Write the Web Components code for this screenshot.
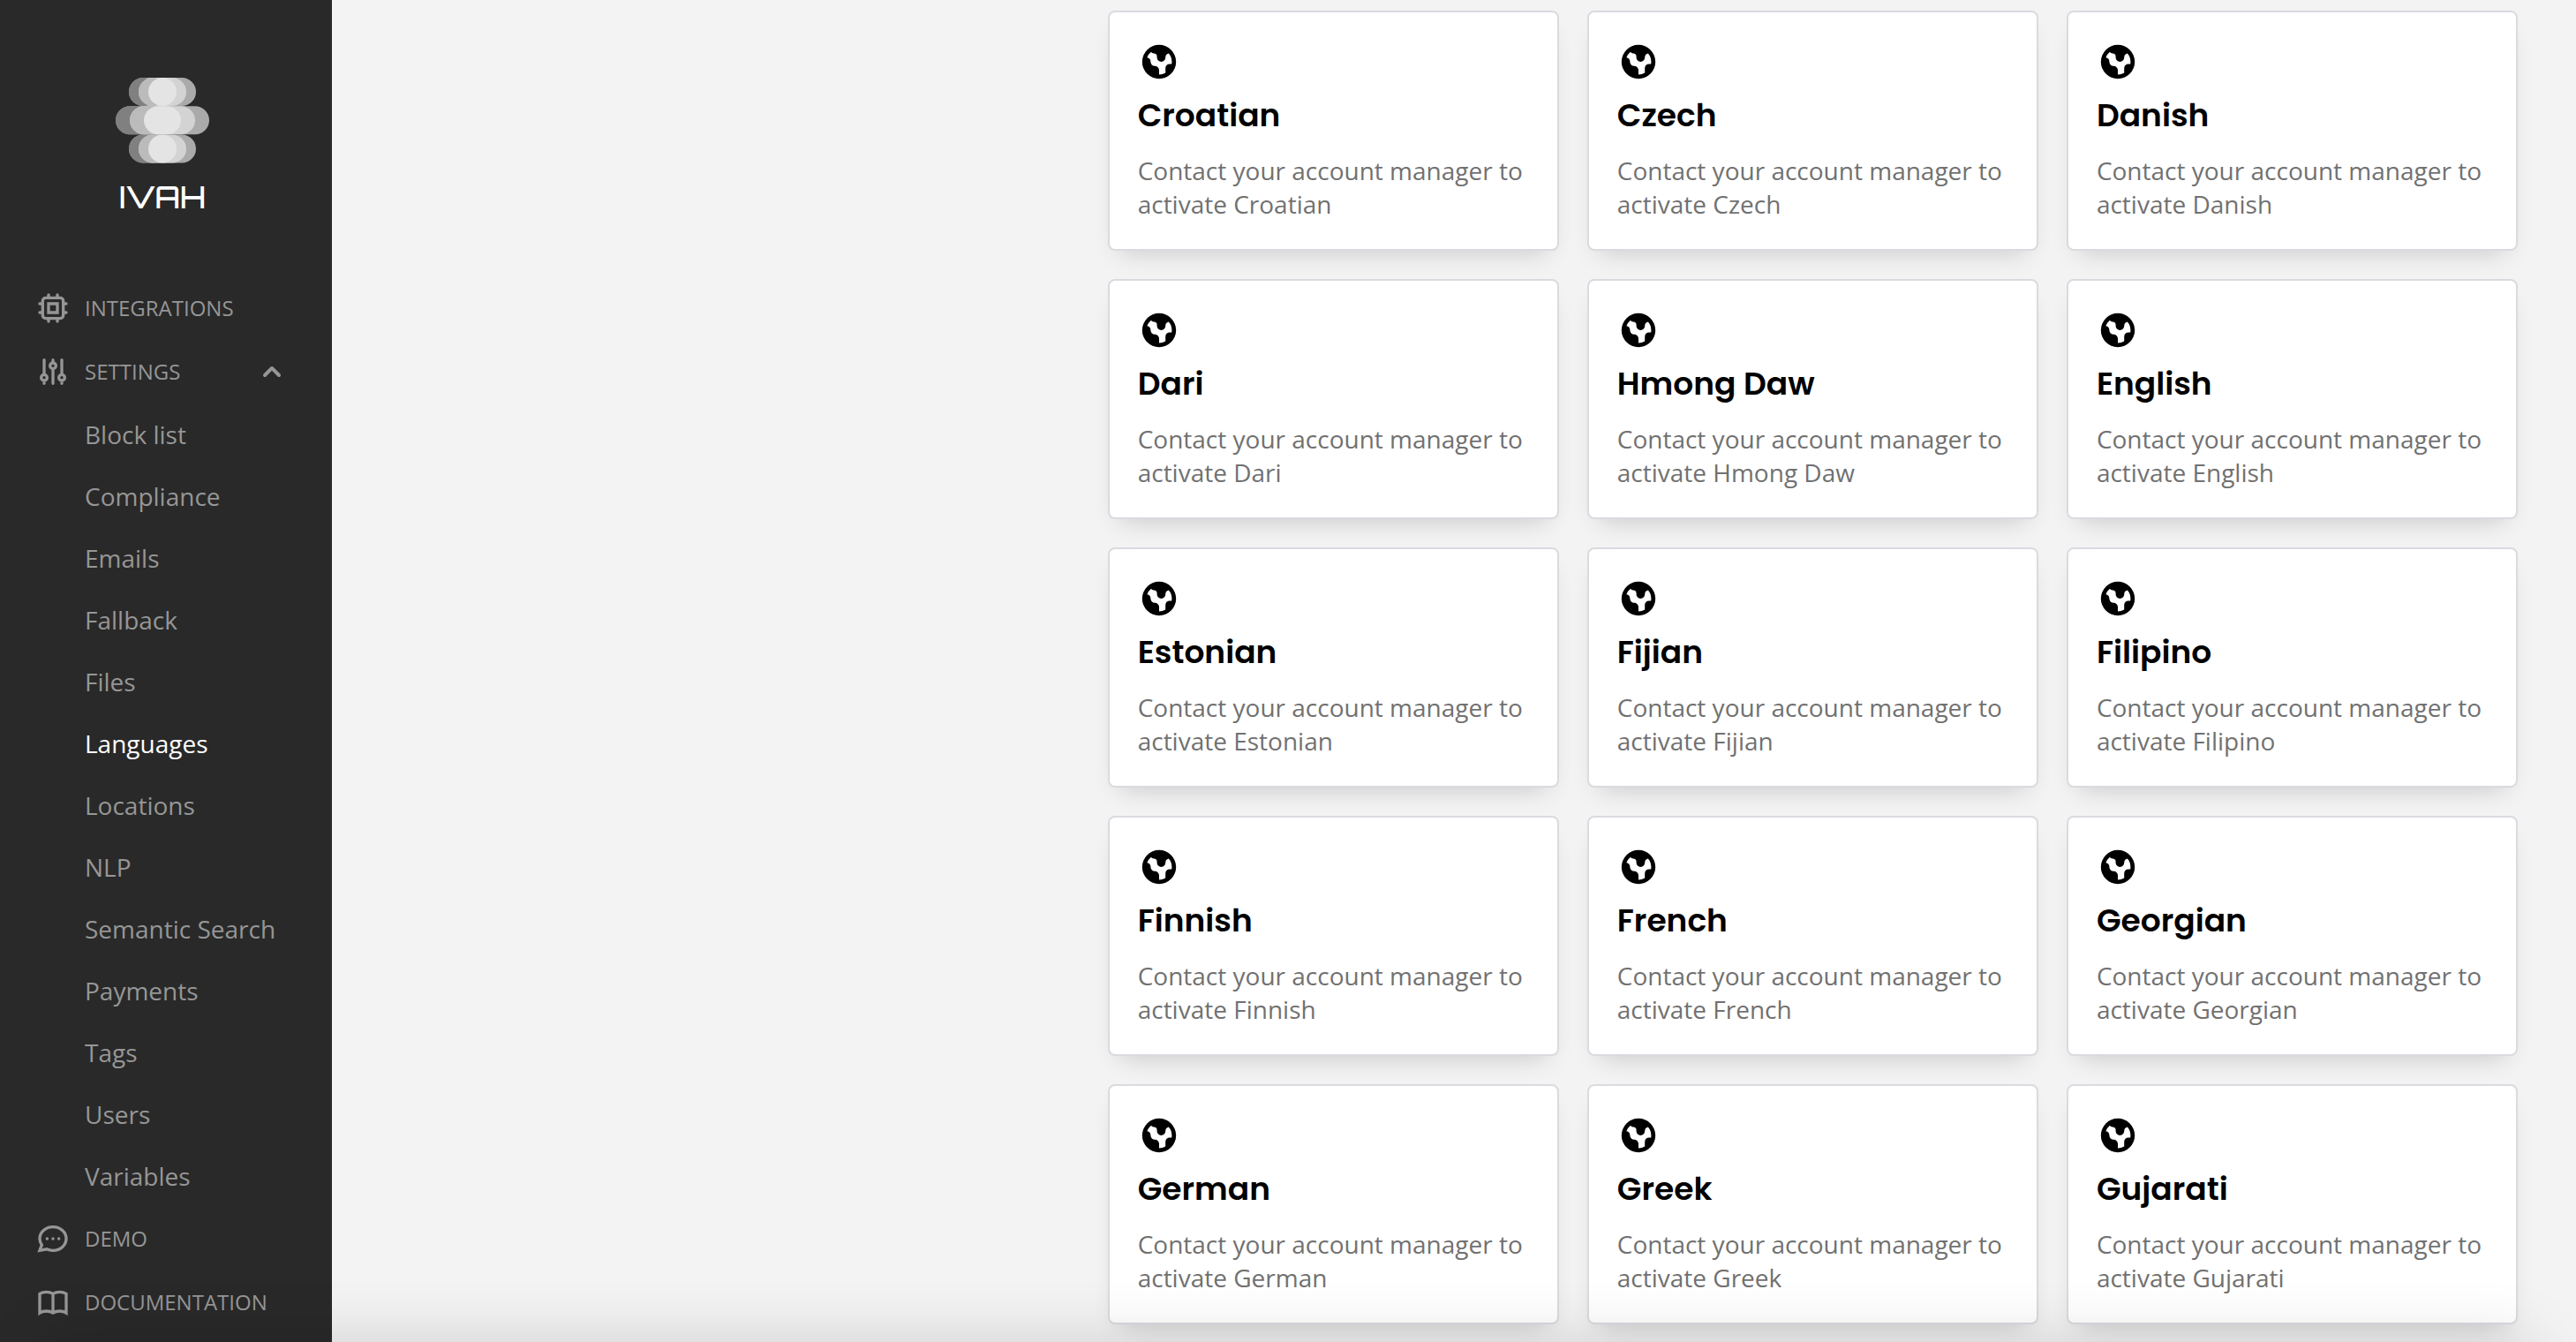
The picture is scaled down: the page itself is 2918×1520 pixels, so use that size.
<!DOCTYPE html>
<html lang="en">
<head>
<meta charset="UTF-8">
<title>IVAH - Languages</title>
<style>
    body {
        margin: 0;
        background-color: #f3f3f3;
        font-family: "Open Sans", sans-serif;
    }
</style>
</head>
<body>
<ivah-app>
    <ivah-sidebar slot="sidebar"></ivah-sidebar>
    <language-list></language-list>
</ivah-app>

<script>
const ICONS = {
    chip: "M9 3v2m6-2v2M9 19v2m6-2v2M5 9H3m2 6H3m18-6h-2m2 6h-2M7 19h10a2 2 0 002-2V7a2 2 0 00-2-2H7a2 2 0 00-2 2v10a2 2 0 002 2zM9 9h6v6H9V9z",
    sliders: "M12 6V4m0 2a2 2 0 100 4m0-4a2 2 0 110 4m-6 8a2 2 0 100-4m0 4a2 2 0 110-4m0 4v2m0-6V4m6 6v10m6-2a2 2 0 100-4m0 4a2 2 0 110-4m0 4v2m0-6V4",
    chat: "M8 12h.01M12 12h.01M16 12h.01M21 12c0 4.418-4.03 8-9 8a9.863 9.863 0 01-4.255-.949L3 20l1.395-3.72C3.512 15.042 3 13.574 3 12c0-4.418 4.03-8 9-8s9 3.582 9 8z",
    book: "M12 6.253v13m0-13C10.832 5.477 9.246 5 7.5 5S4.168 5.477 3 6.253v13C4.168 18.477 5.754 18 7.5 18s3.332.477 4.5 1.253m0-13C13.168 5.477 14.754 5 16.5 5c1.747 0 3.332.477 4.5 1.253v13C19.832 18.477 18.247 18 16.5 18c-1.746 0-3.332.477-4.5 1.253",
};

class IvahApp extends HTMLElement {
    constructor() {
        super();
        this.attachShadow({mode: 'open'});
        this.shadowRoot.innerHTML = `
            <style>
                :host {
                    display: flex;
                    height: 100vh;
                    overflow: hidden;
                }
                main {
                    flex: 1;
                    min-width: 0;
                    display: grid;
                    grid-template-columns: repeat(3, 1fr);
                    column-gap: 32px;
                    align-items: start;
                    padding: 12px 66px 12px 64px;
                }
                /* soft shade along the bottom edge of the window */
                .shade {
                    position: fixed;
                    top: 100%;
                    left: 48px;
                    right: 48px;
                    height: 96px;
                    box-shadow: 0 0 72px rgba(0, 0, 0, 0.15);
                    pointer-events: none;
                }
            </style>
            <slot name="sidebar"></slot>
            <main><slot></slot></main>
            <div class="shade"></div>
        `;
    }
}

class IvahLogo extends HTMLElement {
    constructor() {
        super();
        this.attachShadow({mode: 'open'});
        this.shadowRoot.innerHTML = `
            <style>
                :host {
                    display: flex;
                    flex-direction: column;
                    align-items: center;
                    color: #fff;
                }
                svg {
                    width: 106px;
                    height: 97px;
                }
                span {
                    margin-top: 18px;
                    font: 500 34px/40px "Orbitron", "DejaVu Sans", sans-serif;
                }
            </style>
            <svg viewBox="0 0 106 97" aria-hidden="true">
                <defs>
                    <g id="row">
                        <rect x="15" width="76" height="32" rx="16" fill="#aaa"/>
                        <rect x="15" width="32" height="32" rx="16" fill="#808080"/>
                        <rect x="26" width="54" height="32" rx="16" fill="#d3d3d3"/>
                        <rect x="26" width="32" height="32" rx="16" fill="#bbb"/>
                        <rect x="37" width="32" height="32" rx="16" fill="#e4e4e4"/>
                    </g>
                </defs>
                <use href="#row"/>
                <use href="#row" y="64.5"/>
                <g transform="translate(0 32.3)">
                    <rect width="106" height="32" rx="16" fill="#aaa"/>
                    <rect width="42" height="32" rx="16" fill="#808080"/>
                    <rect x="16" width="74" height="32" rx="16" fill="#d3d3d3"/>
                    <rect x="16" width="41" height="32" rx="16" fill="#bbb"/>
                    <rect x="32" width="42" height="32" rx="16" fill="#e4e4e4"/>
                </g>
            </svg>
            <span>IVAH</span>
        `;
    }
}

class NavItem extends HTMLElement {
    constructor() {
        super();
        const icon = this.getAttribute("icon");
        const expanded = this.hasAttribute("expanded");
        const tag = expanded ? 'button type="button" aria-expanded="true"' : 'a href="#"';
        this.attachShadow({mode: 'open'});
        this.shadowRoot.innerHTML = `
            <style>
                :host {
                    display: block;
                }
                a, button {
                    display: flex;
                    align-items: center;
                    gap: 16px;
                    box-sizing: border-box;
                    width: 100%;
                    height: 72px;
                    padding: 0 48px 0 40px;
                    border: 0;
                    background: none;
                    color: #969696;
                    font: 24px/36px "Open Sans", sans-serif;
                    text-align: left;
                    text-decoration: none;
                    text-transform: uppercase;
                }
                svg {
                    width: 40px;
                    height: 40px;
                    flex: none;
                }
                .label {
                    flex: 1;
                }
            </style>
            <${tag}>
                <svg viewBox="0 0 24 24" fill="none" stroke="currentColor" stroke-width="2" stroke-linecap="round" aria-hidden="true"><path d="${ICONS[icon]}"/></svg>
                <span class="label"><slot></slot></span>
                ${expanded ? `<svg viewBox="0 0 20 20" fill="currentColor" aria-hidden="true"><path d="M14.707 12.707a1 1 0 01-1.414 0L10 9.414l-3.293 3.293a1 1 0 01-1.414-1.414l4-4a1 1 0 011.414 0l4 4a1 1 0 010 1.414z"/></svg>` : ""}
            </${expanded ? "button" : "a"}>
        `;
    }
}

class NavSubitem extends HTMLElement {
    constructor() {
        super();
        this.attachShadow({mode: 'open'});
        this.shadowRoot.innerHTML = `
            <style>
                :host {
                    display: block;
                }
                a {
                    display: block;
                    padding: 16px 0 16px 96px;
                    color: #969696;
                    font-size: 28px;
                    line-height: 38px;
                    text-decoration: none;
                }
                :host([active]) a {
                    color: #fff;
                }
            </style>
            <a href="#"><slot></slot></a>
        `;
    }
}

class IvahSidebar extends HTMLElement {
    constructor() {
        super();
        this.attachShadow({mode: 'open'});
        this.shadowRoot.innerHTML = `
            <style>
                :host {
                    display: block;
                    flex: none;
                    width: 376px;
                    background-color: #292929;
                }
                ivah-logo {
                    padding: 88px 8px 70px 0;
                }
            </style>
            <ivah-logo></ivah-logo>
            <nav>
                <nav-item icon="chip">Integrations</nav-item>
                <nav-item icon="sliders" expanded>Settings</nav-item>
                <nav-subitem>Block list</nav-subitem>
                <nav-subitem>Compliance</nav-subitem>
                <nav-subitem>Emails</nav-subitem>
                <nav-subitem>Fallback</nav-subitem>
                <nav-subitem>Files</nav-subitem>
                <nav-subitem active>Languages</nav-subitem>
                <nav-subitem>Locations</nav-subitem>
                <nav-subitem>NLP</nav-subitem>
                <nav-subitem>Semantic Search</nav-subitem>
                <nav-subitem>Payments</nav-subitem>
                <nav-subitem>Tags</nav-subitem>
                <nav-subitem>Users</nav-subitem>
                <nav-subitem>Variables</nav-subitem>
                <nav-item icon="chat">Demo</nav-item>
                <nav-item icon="book">Documentation</nav-item>
            </nav>
        `;
    }
}

class LanguageCard extends HTMLElement {
    constructor() {
        super();
        this.attachShadow({mode: 'open'});
        this.shadowRoot.innerHTML = `
            <style>
                :host {
                    display: block;
                    padding: 32px;
                    border: 2px solid #dadae0;
                    border-radius: 8px;
                    background-color: #fff;
                    box-shadow: 0 14px 28px -14px rgba(0, 0, 0, 0.2);
                }
                svg {
                    display: block;
                    width: 48px;
                    height: 48px;
                }
                h3 {
                    margin: 8px 0 14px;
                    color: #000;
                    font: 600 36px/58px "Poppins", "Inter", sans-serif;
                }
                p {
                    margin: 0;
                    color: #717171;
                    font-size: 28px;
                    line-height: 38px;
                }
            </style>
            <svg viewBox="0 0 20 20" aria-hidden="true"><path fill-rule="evenodd" d="M10 18a8 8 0 100-16 8 8 0 000 16zM4.332 8.027a6.012 6.012 0 011.912-2.706C6.512 5.73 6.974 6 7.5 6A1.5 1.5 0 019 7.5V8a2 2 0 004 0 2 2 0 011.523-1.943A5.977 5.977 0 0116 10c0 .34-.028.675-.083 1H15a2 2 0 00-2 2v2.197A5.973 5.973 0 0110 16v-2a2 2 0 00-2-2 2 2 0 01-2-2 2 2 0 00-1.668-1.973z"/></svg>
            <h3></h3>
            <p></p>
        `;
    }

    connectedCallback() {
        const name = this.getAttribute("name");
        this.shadowRoot.querySelector("h3").textContent = name;
        this.shadowRoot.querySelector("p").textContent = `Contact your account manager to activate ${name}`;
    }
}

class LanguageList extends HTMLElement {
    constructor() {
        super();
        const names = [
            "Croatian", "Czech", "Danish",
            "Dari", "Hmong Daw", "English",
            "Estonian", "Fijian", "Filipino",
            "Finnish", "French", "Georgian",
            "German", "Greek", "Gujarati",
        ];
        this.attachShadow({mode: 'open'});
        this.shadowRoot.innerHTML = `
            <style>
                :host {
                    display: grid;
                    grid-column: 2 / span 2;
                    grid-template-columns: repeat(3, 1fr);
                    gap: 32px;
                }
            </style>
            ${names.map((name) => `<language-card name="${name}"></language-card>`).join("")}
        `;
    }
}

customElements.define("ivah-logo", IvahLogo);
customElements.define("nav-item", NavItem);
customElements.define("nav-subitem", NavSubitem);
customElements.define("ivah-sidebar", IvahSidebar);
customElements.define("language-card", LanguageCard);
customElements.define("language-list", LanguageList);
customElements.define("ivah-app", IvahApp);
</script>
</body>
</html>
